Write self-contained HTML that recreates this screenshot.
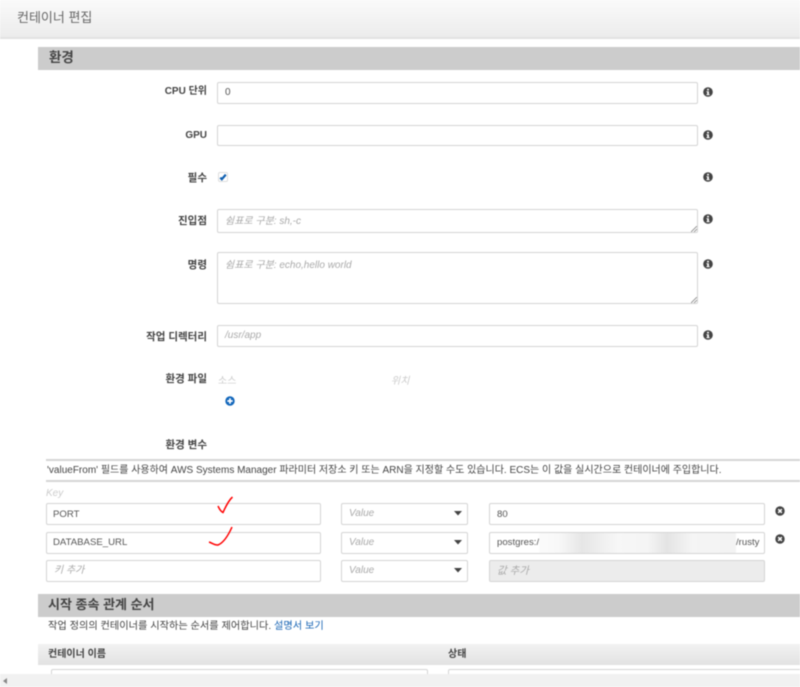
<!DOCTYPE html>
<html lang="ko"><head><meta charset="utf-8">
<style>
html,body{margin:0;padding:0;background:#fff;width:800px;height:687px;overflow:hidden;}
#w{position:relative;width:800px;height:687px;overflow:hidden;background:#fff;font-family:"Liberation Sans","Noto Sans CJK KR",sans-serif;font-size:10px;color:#444;filter:blur(.4px);}
.a{position:absolute;white-space:nowrap;}
.head{left:0;top:0;width:800px;height:37px;background:linear-gradient(#fafafa,#ececec);border-bottom:2px solid #e2e2e2;}
.sec{left:38px;width:762px;background:#ccc;font-size:13.5px;font-weight:bold;color:#444;box-sizing:border-box;padding-left:11px;}
.lab{right:593px;text-align:right;font-weight:bold;font-size:10.5px;color:#444;line-height:14px;}
.in{box-sizing:border-box;border:1px solid #d5d5d5;border-radius:2px;background:#fff;font-size:10px;line-height:14px;color:#555;padding-left:7px;}
.k{font-size:9.6px;padding-left:6px;line-height:21px;}
.ph{font-style:italic;color:#aaa;}
.i{width:10px;height:10px;}
</style></head><body><div id="w">
<div class="a head"></div>
<div class="a" style="left:17px;top:9px;font-size:13px;line-height:18px;color:#666;">컨테이너 편집</div>

<div class="a sec" style="top:47px;height:23px;line-height:21px;">환경</div>

<div class="a lab" style="top:85px;font-size:10px;">CPU 단위</div>
<div class="a in" style="left:217px;top:82px;width:481px;height:22px;line-height:20px;">0</div>
<div class="a lab" style="top:129px;font-size:10px;">GPU</div>
<div class="a in" style="left:217px;top:125px;width:481px;height:21px;"></div>
<div class="a lab" style="top:171px;">필수</div>
<svg class="a" style="left:218px;top:172px;" width="10" height="10" viewBox="0 0 10 10"><rect x=".5" y=".5" width="9" height="9" rx="1.5" fill="#fff" stroke="#ddd"/><path d="M2.3 5.6L3.8 7.2L7.8 2.6" fill="none" stroke="#0f5fb0" stroke-width="2.2"/></svg>
<div class="a lab" style="top:214px;">진입점</div>
<div class="a in ph" style="left:217px;top:209px;width:481px;height:24px;line-height:23px;">쉼표로 구분: sh,-c</div>
<div class="a lab" style="top:258px;">명령</div>
<div class="a in ph" style="left:217px;top:252px;width:481px;height:52px;line-height:25px;">쉼표로 구분: echo,hello world</div>
<svg class="a" style="left:691px;top:226px;" width="6" height="6"><path d="M0 6L6 0M3 6L6 3" stroke="#888" stroke-width=".8"/></svg>
<svg class="a" style="left:691px;top:297px;" width="6" height="6"><path d="M0 6L6 0M3 6L6 3" stroke="#888" stroke-width=".8"/></svg>
<div class="a lab" style="top:330px;">작업 디렉터리</div>
<div class="a in ph" style="left:217px;top:325px;width:481px;height:22px;line-height:20px;">/usr/app</div>

<svg class="a i" style="left:703px;top:87px;" viewBox="0 0 10 10"><circle cx="5" cy="5" r="4.8" fill="#444"/><rect x="4.1" y="1.8" width="1.8" height="1.6" fill="#fff"/><path d="M3.4 4.2H5.9V7.2H6.7V8.1H3.4V7.2H4.2V5.1H3.4Z" fill="#fff"/></svg>
<svg class="a i" style="left:703px;top:130px;" viewBox="0 0 10 10"><circle cx="5" cy="5" r="4.8" fill="#444"/><rect x="4.1" y="1.8" width="1.8" height="1.6" fill="#fff"/><path d="M3.4 4.2H5.9V7.2H6.7V8.1H3.4V7.2H4.2V5.1H3.4Z" fill="#fff"/></svg>
<svg class="a i" style="left:703px;top:172px;" viewBox="0 0 10 10"><circle cx="5" cy="5" r="4.8" fill="#444"/><rect x="4.1" y="1.8" width="1.8" height="1.6" fill="#fff"/><path d="M3.4 4.2H5.9V7.2H6.7V8.1H3.4V7.2H4.2V5.1H3.4Z" fill="#fff"/></svg>
<svg class="a i" style="left:703px;top:214px;" viewBox="0 0 10 10"><circle cx="5" cy="5" r="4.8" fill="#444"/><rect x="4.1" y="1.8" width="1.8" height="1.6" fill="#fff"/><path d="M3.4 4.2H5.9V7.2H6.7V8.1H3.4V7.2H4.2V5.1H3.4Z" fill="#fff"/></svg>
<svg class="a i" style="left:703px;top:259px;" viewBox="0 0 10 10"><circle cx="5" cy="5" r="4.8" fill="#444"/><rect x="4.1" y="1.8" width="1.8" height="1.6" fill="#fff"/><path d="M3.4 4.2H5.9V7.2H6.7V8.1H3.4V7.2H4.2V5.1H3.4Z" fill="#fff"/></svg>
<svg class="a i" style="left:703px;top:330px;" viewBox="0 0 10 10"><circle cx="5" cy="5" r="4.8" fill="#444"/><rect x="4.1" y="1.8" width="1.8" height="1.6" fill="#fff"/><path d="M3.4 4.2H5.9V7.2H6.7V8.1H3.4V7.2H4.2V5.1H3.4Z" fill="#fff"/></svg>

<div class="a lab" style="top:372px;">환경 파일</div>
<div class="a" style="left:218px;top:375px;color:#ccc;line-height:14px;">소스</div>
<div class="a" style="left:391px;top:375px;color:#ccc;line-height:14px;font-style:italic;">위치</div>
<svg class="a" style="left:225px;top:396px;" width="10" height="10" viewBox="0 0 10 10"><circle cx="5" cy="5" r="4.7" fill="#1166bb"/><path d="M2.3 5H7.7M5 2.3V7.7" stroke="#fff" stroke-width="1.7"/></svg>
<div class="a lab" style="top:438px;">환경 변수</div>

<div class="a" style="left:46px;top:459px;width:754px;height:23px;box-sizing:border-box;border-top:2px solid #d5d5d5;border-bottom:2px solid #d5d5d5;line-height:19px;font-size:10px;color:#444;padding-left:1px;">'valueFrom' 필드를 사용하여 AWS Systems Manager 파라미터 저장소 키 또는 ARN을 지정할 수도 있습니다. ECS는 이 값을 실시간으로 컨테이너에 주입합니다.</div>
<div class="a" style="left:46px;top:487px;color:#ccc;font-style:italic;line-height:14px;">Key</div>

<div class="a in k" style="left:46px;top:503px;width:275px;height:22px;">PORT</div>
<div class="a in k" style="left:46px;top:532px;width:275px;height:22px;line-height:19px;">DATABASE_URL</div>
<div class="a in ph" style="left:46px;top:560px;width:275px;height:22px;line-height:20px;">키 추가</div>

<div class="a in ph" style="left:341px;top:503px;width:127px;height:22px;line-height:20px;">Value</div>
<div class="a in ph" style="left:341px;top:532px;width:127px;height:22px;line-height:20px;">Value</div>
<div class="a in ph" style="left:341px;top:560px;width:127px;height:22px;line-height:20px;">Value</div>
<svg class="a" style="left:454px;top:511px;" width="8" height="5"><path d="M0 0H8L4 4.500Z" fill="#444"/></svg>
<svg class="a" style="left:454px;top:540px;" width="8" height="5"><path d="M0 0H8L4 4.500Z" fill="#444"/></svg>
<svg class="a" style="left:454px;top:568px;" width="8" height="5"><path d="M0 0H8L4 4.500Z" fill="#444"/></svg>

<div class="a in k" style="left:489px;top:503px;width:276px;height:22px;padding-left:7px;">80</div>
<div class="a in k" style="left:489px;top:532px;width:276px;height:22px;padding-left:7px;line-height:20px;">postgres:/</div>
<div class="a" style="left:539px;top:533px;width:197px;height:20px;background:linear-gradient(90deg,#fbfbfb 0,#f8f8f8 10%,#e6e6e6 22%,#f7f7f7 40%,#f5f5f5 55%,#e4e4e4 65%,#f5f5f5 78%,#f3f3f3 100%);"></div>
<div class="a" style="left:736px;top:534px;font-size:9.6px;line-height:17px;color:#555;">/rusty</div>
<div class="a in ph" style="left:489px;top:560px;width:276px;height:22px;line-height:20px;background:#ececec;font-size:10.5px;">값 추가</div>

<svg class="a" style="left:775px;top:506px;" width="10" height="10" viewBox="0 0 10 10"><circle cx="5" cy="5" r="4.7" fill="#444"/><path d="M3.2 3.2L6.8 6.8M6.8 3.2L3.2 6.8" stroke="#fff" stroke-width="1.5"/></svg>
<svg class="a" style="left:775px;top:534px;" width="10" height="10" viewBox="0 0 10 10"><circle cx="5" cy="5" r="4.7" fill="#444"/><path d="M3.2 3.2L6.8 6.8M6.8 3.2L3.2 6.8" stroke="#fff" stroke-width="1.5"/></svg>

<svg class="a" style="left:205px;top:490px;" width="40" height="60" viewBox="0 0 40 60"><path d="M13 16C14 18 15 21 18 22.500C20 18 24 10 27.500 7" fill="none" stroke="#f00" stroke-width="1.5"/><path d="M4 52C7 53 10 55.500 13 55C18 53 23 46 27 37" fill="none" stroke="#f00" stroke-width="1.500"/></svg>

<div class="a sec" style="top:594px;height:23px;line-height:21px;padding-left:10px;font-size:13px;">시작 종속 관계 순서</div>
<div class="a" style="left:48px;top:620px;line-height:14px;color:#444;font-size:10.2px;">작업 정의의 컨테이너를 시작하는 순서를 제어합니다. <span style="color:#1a66b5;">설명서 보기</span></div>
<div class="a" style="left:38px;top:644px;width:762px;height:21px;background:linear-gradient(#f2f2f2,#e2e2e2);"></div>
<div class="a" style="left:48px;top:648px;font-weight:bold;line-height:14px;color:#444;">컨테이너 이름</div>
<div class="a" style="left:448px;top:648px;font-weight:bold;line-height:14px;color:#444;">상태</div>
<div class="a" style="left:51px;top:669px;width:377px;height:24px;box-sizing:border-box;border:1px solid #d5d5d5;border-radius:2px;"></div>
<div class="a" style="left:448px;top:669px;width:360px;height:24px;box-sizing:border-box;border:1px solid #d5d5d5;border-radius:2px;"></div>
<div class="a" style="left:0;top:674px;width:800px;height:13px;background:#f1f1f1;"></div>
<svg class="a" style="left:3px;top:678px;" width="4" height="6"><path d="M4 0V6L0 3Z" fill="#888"/></svg>
</div></body></html>
